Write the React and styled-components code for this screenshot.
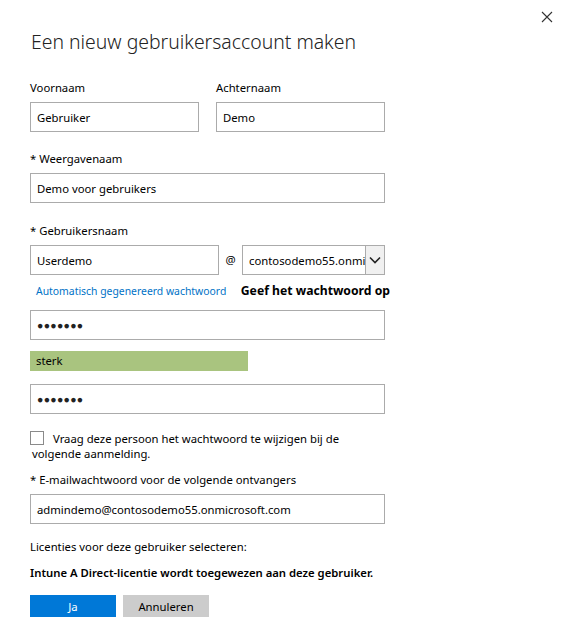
import React from 'react';
import styled, { createGlobalStyle } from 'styled-components';

const GlobalStyle = createGlobalStyle`
  html, body {
    margin: 0;
    padding: 0;
    background: #fff;
    font-family: "Noto Sans", "Open Sans", sans-serif;
    color: #000;
  }
`;

const Panel = styled.div`
  position: relative;
  width: 577px;
  height: 631px;
  box-sizing: border-box;
  padding: 28px 0 0 30px;
  overflow: hidden;
`;

const Close = styled.button`
  position: absolute;
  top: 9px;
  right: 22px;
  width: 16px;
  height: 16px;
  padding: 0;
  border: none;
  background: none;
  cursor: pointer;
`;

const Title = styled.h1`
  margin: 0 0 0 1px;
  font-size: 19.4px;
  font-weight: 300;
  line-height: 28px;
  color: #222;
`;

const Form = styled.div`
  width: 355px;
  margin-top: 24px;
  display: flex;
  flex-direction: column;
  font-size: 11.3px;
`;

const Row = styled.div`
  display: flex;
  align-items: flex-start;
  gap: ${(p) => p.gap || 0}px;
  margin-top: ${(p) => p.mt || 0}px;
  min-width: 0;
`;

const Field = styled.div`
  display: flex;
  flex-direction: column;
  min-width: 0;
  flex: ${(p) => (p.w ? `0 0 ${p.w}px` : '1 1 0')};
`;

const Label = styled.label`
  font-size: 11.3px;
  line-height: 16px;
  height: 16px;
  margin-bottom: 6px;
`;

const Input = styled.div`
  box-sizing: border-box;
  height: 30px;
  width: 100%;
  border: 1px solid #ababab;
  padding: 0 6px;
  display: flex;
  align-items: center;
  font-size: 11.3px;
  background: #fff;
  white-space: nowrap;
  overflow: hidden;
`;

const Dots = styled.span`
  font-size: 10.5px;
  letter-spacing: 0.3px;
  color: #222;
`;

const At = styled.span`
  flex: 0 0 23px;
  text-align: center;
  font-size: 11.3px;
  line-height: 30px;
`;

const Select = styled.div`
  flex: 1 1 0;
  min-width: 0;
  box-sizing: border-box;
  height: 30px;
  border: 1px solid #ababab;
  display: flex;
  align-items: stretch;
  font-size: 11.3px;
`;

const SelectValue = styled.div`
  flex: 1 1 0;
  min-width: 0;
  padding: 0 6px;
  display: flex;
  align-items: center;
  white-space: nowrap;
  overflow: hidden;
`;

const SelectArrow = styled.div`
  flex: 0 0 18px;
  border-left: 1px solid #ababab;
  background: #f0f0f0;
  display: flex;
  align-items: center;
  justify-content: center;
`;

const LinkRow = styled.div`
  display: flex;
  justify-content: space-between;
  align-items: baseline;
  margin: 8px -5px 11px 6px;
  line-height: 16px;
  white-space: nowrap;
`;

const Link = styled.a`
  font-size: 10.4px;
  color: #0072c6;
  text-decoration: none;
`;

const Bold = styled.span`
  font-size: 12.2px;
  font-weight: 700;
`;

const Strength = styled.div`
  width: 218px;
  height: 20px;
  margin: 11px 0 13px;
  background: #a9c47f;
  box-sizing: border-box;
  padding-left: 6px;
  font-size: 11.3px;
  line-height: 19px;
`;

const Check = styled.div`
  display: flex;
  align-items: flex-start;
  margin-top: 17px;
  font-size: 11.3px;
  line-height: 15px;
`;

const Box = styled.span`
  flex: 0 0 auto;
  width: 12px;
  height: 12px;
  border: 1px solid #8a8a8a;
  margin: 0 9px 0 0;
  background: #fff;
`;

const Text = styled.p`
  margin: ${(p) => p.mt || 0}px 0 0 ${(p) => p.ml || 0}px;
  font-size: 11.3px;
  line-height: 16px;
  font-weight: ${(p) => (p.bold ? 600 : 400)};
  white-space: nowrap;
`;

const Button = styled.button`
  width: 86px;
  height: 22px;
  border: none;
  padding: 0;
  font-family: inherit;
  font-size: 11.3px;
  color: ${(p) => (p.primary ? '#fff' : '#000')};
  background: ${(p) => (p.primary ? '#0078d7' : '#cccccc')};
  cursor: pointer;
`;

export default function App() {
  return (
    <>
      <GlobalStyle />
      <Panel>
        <Close aria-label="Sluiten">
          <svg width="16" height="16" viewBox="0 0 16 16">
            <path d="M3 3 L13 13 M13 3 L3 13" stroke="#333" strokeWidth="1.1" />
          </svg>
        </Close>
        <Title>Een nieuw gebruikersaccount maken</Title>
        <Form>
          <Row gap={17}>
            <Field w={169}>
              <Label>Voornaam</Label>
              <Input>Gebruiker</Input>
            </Field>
            <Field>
              <Label>Achternaam</Label>
              <Input>Demo</Input>
            </Field>
          </Row>

          <Row mt={19}>
            <Field>
              <Label>* Weergavenaam</Label>
              <Input>Demo voor gebruikers</Input>
            </Field>
          </Row>

          <Row mt={20}>
            <Field>
              <Label>* Gebruikersnaam</Label>
              <Row>
                <Field w={189}>
                  <Input>Userdemo</Input>
                </Field>
                <At>@</At>
                <Select>
                  <SelectValue>contosodemo55.onmicrosoft.com</SelectValue>
                  <SelectArrow>
                    <svg width="12" height="8" viewBox="0 0 12 8">
                      <path d="M1 1.5 L6 6.5 L11 1.5" fill="none" stroke="#222" strokeWidth="1.6" />
                    </svg>
                  </SelectArrow>
                </Select>
              </Row>
            </Field>
          </Row>

          <LinkRow>
            <Link href="#">Automatisch gegenereerd wachtwoord</Link>
            <Bold>Geef het wachtwoord op</Bold>
          </LinkRow>

          <Input><Dots>●●●●●●●</Dots></Input>
          <Strength>sterk</Strength>
          <Input><Dots>●●●●●●●</Dots></Input>

          <Check>
            <Box />
            <span>Vraag deze persoon het wachtwoord te wijzigen bij de</span>
          </Check>
          <Text ml={2}>volgende aanmelding.</Text>

          <Row mt={10}>
            <Field>
              <Label>* E-mailwachtwoord voor de volgende ontvangers</Label>
              <Input>admindemo@contosodemo55.onmicrosoft.com</Input>
            </Field>
          </Row>

          <Text mt={15}>Licenties voor deze gebruiker selecteren:</Text>
          <Text mt={10} bold>Intune A Direct-licentie wordt toegewezen aan deze gebruiker.</Text>

          <Row gap={7} mt={14}>
            <Button primary>Ja</Button>
            <Button>Annuleren</Button>
          </Row>
        </Form>
      </Panel>
    </>
  );
}
